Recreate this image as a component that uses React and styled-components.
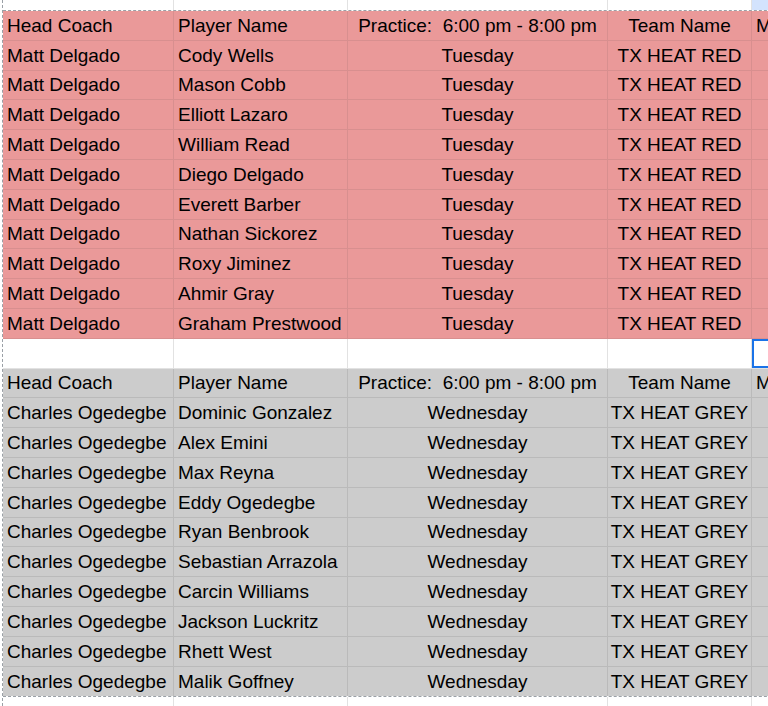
import React from "react";
import styled, { createGlobalStyle } from "styled-components";

const Global = createGlobalStyle`
  html, body { margin: 0; padding: 0; background: #ffffff; }
  body { font-family: "Liberation Sans", Arial, sans-serif; }
`;

const COLS = "171px 174px 260px 144px 120px";

const tones = {
  red: { bg: "#ea9999", line: "#d88f8f" },
  grey: { bg: "#cccccc", line: "#bababa" },
  blank: { bg: "#ffffff", line: "#e2e2e2" },
};

const Page = styled.div`
  width: 768px;
  height: 706px;
  overflow: hidden;
  padding-left: 2px;
  box-sizing: border-box;
  display: flex;
`;

const Frame = styled.div`
  flex: 1;
  min-width: 0;
  overflow: hidden;
  border-left: 1px dashed #9aa0a6;
  display: flex;
  flex-direction: column;
`;

const Strip = styled.div`
  display: grid;
  grid-template-columns: ${COLS};
  height: ${(p) => p.$h}px;
  flex: none;
`;

const StripCell = styled.div`
  border-right: 1px solid #e2e2e2;
  background: ${(p) => (p.$active ? "#d3e3fd" : "#ffffff")};
`;

const Block = styled.div`
  flex: none;
  width: max-content;
  border-top: 1px dashed #9aa0a6;
  border-bottom: 1px dashed #9aa0a6;
`;

const Row = styled.div`
  display: grid;
  grid-template-columns: ${COLS};
  height: 29.8px;
  background: ${(p) => tones[p.$tone].bg};
`;

const Cell = styled.div`
  box-sizing: border-box;
  display: flex;
  align-items: flex-end;
  justify-content: ${(p) => (p.$center ? "center" : "flex-start")};
  padding: 0 ${(p) => (p.$center ? 2 : 4)}px 3px;
  border-right: 1px solid ${(p) => tones[p.$tone].line};
  border-bottom: ${(p) => (p.$last ? "none" : `1px solid ${tones[p.$tone].line}`)};
  font-size: 19px;
  line-height: 22px;
  color: #000000;
  white-space: pre;
  overflow: hidden;
  box-shadow: ${(p) => (p.$selected ? "inset 0 0 0 2px #1a73e8" : "none")};
`;

const redPlayers = [
  "Cody Wells",
  "Mason Cobb",
  "Elliott Lazaro",
  "William Read",
  "Diego Delgado",
  "Everett Barber",
  "Nathan Sickorez",
  "Roxy Jiminez",
  "Ahmir Gray",
  "Graham Prestwood",
];

const greyPlayers = [
  "Dominic Gonzalez",
  "Alex Emini",
  "Max Reyna",
  "Eddy Ogedegbe",
  "Ryan Benbrook",
  "Sebastian Arrazola",
  "Carcin Williams",
  "Jackson Luckritz",
  "Rhett West",
  "Malik Goffney",
];

const header = ["Head Coach", "Player Name", "Practice:  6:00 pm - 8:00 pm", "Team Name", "M"];

const rows = [
  { tone: "red", cells: header },
  ...redPlayers.map((p) => ({ tone: "red", cells: ["Matt Delgado", p, "Tuesday", "TX HEAT RED", ""] })),
  { tone: "blank", cells: ["", "", "", "", ""], selected: 4 },
  { tone: "grey", cells: header },
  ...greyPlayers.map((p) => ({
    tone: "grey",
    cells: ["Charles Ogedegbe", p, "Wednesday", "TX HEAT GREY", ""],
  })),
];

const centered = [false, false, true, true, false];

export default function App() {
  return (
    <>
      <Global />
      <Page>
        <Frame>
          <Strip $h={10}>
            {[0, 1, 2, 3, 4].map((i) => (
              <StripCell key={i} $active={i === 4} />
            ))}
          </Strip>
          <Block>
            {rows.map((r, ri) => (
              <Row key={ri} $tone={r.tone}>
                {r.cells.map((c, ci) => (
                  <Cell
                    key={ci}
                    $tone={r.tone}
                    $center={centered[ci]}
                    $last={ri === rows.length - 1}
                    $selected={r.selected === ci}
                  >
                    {c}
                  </Cell>
                ))}
              </Row>
            ))}
          </Block>
          <Strip $h={20}>
            {[0, 1, 2, 3, 4].map((i) => (
              <StripCell key={i} />
            ))}
          </Strip>
        </Frame>
      </Page>
    </>
  );
}
